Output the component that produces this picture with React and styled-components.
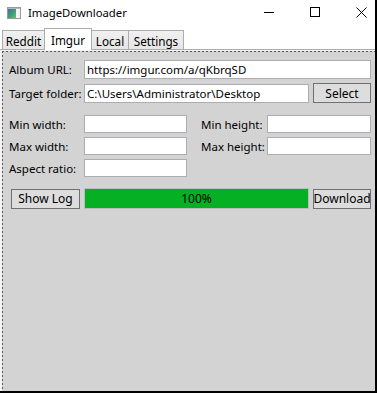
import React from 'react';
import styled, { createGlobalStyle } from 'styled-components';

const Global = createGlobalStyle`
  html, body {
    margin: 0;
    padding: 0;
    background: #ffffff;
  }
  body {
    font-family: "Noto Sans", "Open Sans", sans-serif;
    font-size: 11.5px;
    color: #000;
  }
`;

const Window = styled.div`
  width: 377px;
  height: 393px;
  box-sizing: border-box;
  border-right: 2px solid #000;
  border-bottom: 2px solid #000;
  background: #fff;
  display: flex;
  flex-direction: column;
  overflow: hidden;
`;

const TitleBar = styled.div`
  height: 27px;
  flex: none;
  display: flex;
  align-items: center;
  padding-left: 7px;
  box-sizing: border-box;
  padding-bottom: 2px;
`;

const Title = styled.span`
  margin-left: 7px;
  font-size: 11.3px;
  flex: 1;
`;

const Controls = styled.div`
  display: flex;
  align-items: center;
  gap: 35px;
  padding-right: 8px;
`;

const Glyph = styled.svg`
  width: 11px;
  height: 11px;
  display: block;
`;

const TabStrip = styled.div`
  height: 22px;
  flex: none;
  display: flex;
  align-items: flex-end;
  padding-left: 3px;
`;

const Tab = styled.div`
  width: ${p => p.$w}px;
  height: ${p => (p.$active ? 22 : 19)}px;
  box-sizing: border-box;
  display: flex;
  align-items: center;
  justify-content: center;
  padding-top: ${p => (p.$active ? 0 : 1)}px;
  border: 1px solid #acacac;
  border-bottom: none;
  margin-left: -1px;
  background: ${p => (p.$active ? '#fff' : 'linear-gradient(#f0f0f0, #e5e5e5)')};
  position: relative;
  z-index: ${p => (p.$active ? 1 : 0)};
  margin-bottom: ${p => (p.$active ? -1 : 0)}px;
  font-size: 11.7px;
`;

const Pane = styled.div`
  flex: 1;
  border-top: 1px solid #acacac;
  padding: 1px 0 0 2px;
  display: flex;
  background: #f4f4f4;
`;

const Inner = styled.div`
  flex: 1;
  box-sizing: border-box;
  padding: 9px 4px 0 7px;
  background:
    repeating-linear-gradient(to right, #5a5a5a 0 2px, transparent 2px 4px) top left / 100% 1px no-repeat,
    repeating-linear-gradient(to bottom, #5a5a5a 0 2px, transparent 2px 4px) top left / 1px 100% no-repeat,
    #d3d3d3;
`;

const Row = styled.div`
  display: flex;
  align-items: center;
  height: ${p => p.$h || 19}px;
  margin-bottom: ${p => p.$mb || 0}px;
  gap: 4px;
`;

const Label = styled.span`
  width: ${p => p.$w || 71}px;
  flex: none;
  white-space: nowrap;
`;

const Input = styled.div`
  height: ${p => p.$h || 19}px;
  box-sizing: border-box;
  border: 1px solid #abadb3;
  background: #fff;
  padding-left: 2px;
  display: flex;
  align-items: center;
  white-space: nowrap;
  overflow: hidden;
  flex: ${p => (p.$w ? 'none' : '1')};
  width: ${p => (p.$w ? `${p.$w}px` : 'auto')};
`;

const Button = styled.div`
  width: ${p => p.$w}px;
  height: 20px;
  box-sizing: border-box;
  border: 1px solid #707070;
  background: #dddddd;
  display: flex;
  align-items: center;
  justify-content: center;
  flex: none;
  font-size: 12px;
  margin-left: ${p => p.$ml || 0}px;
`;

const SizeGrid = styled.div`
  display: grid;
  grid-template-columns: 75px 103px 80px 104px;
  grid-auto-rows: 18px;
  row-gap: 4px;
  align-items: center;
  margin-top: 12px;
`;

const GridLabel = styled.span`
  padding-left: ${p => p.$pl || 0}px;
  white-space: nowrap;
`;

const Progress = styled.div`
  width: 225px;
  height: 21px;
  box-sizing: border-box;
  border: 1px solid #bcbcbc;
  background: #06b025;
  display: flex;
  align-items: center;
  justify-content: center;
  flex: none;
  font-size: 12px;
`;

const ActionRow = styled.div`
  display: flex;
  align-items: center;
  margin-top: 11px;
  height: 21px;
  gap: 4px;
`;

function AppIcon() {
  return (
    <svg width="14" height="12" viewBox="0 0 14 12">
      <defs>
        <linearGradient id="ic" x1="0" y1="0" x2="1" y2="1">
          <stop offset="0" stopColor="#3d6fb0" />
          <stop offset="0.5" stopColor="#3f9a7a" />
          <stop offset="1" stopColor="#6fc06a" />
        </linearGradient>
      </defs>
      <rect x="0.5" y="0.5" width="13" height="11" fill="#e8e8e8" stroke="#9a9a9a" />
      <rect x="1" y="2" width="8" height="9" fill="url(#ic)" />
      <rect x="9" y="2" width="4" height="9" fill="#f4f4f4" />
      <rect x="1" y="1" width="12" height="1" fill="#b8b8b8" />
    </svg>
  );
}

export default function App() {
  return (
    <>
      <Global />
      <Window>
        <TitleBar>
          <AppIcon />
          <Title>ImageDownloader</Title>
          <Controls>
            <Glyph viewBox="0 0 11 11">
              <line x1="0" y1="5.5" x2="10" y2="5.5" stroke="#000" strokeWidth="1" />
            </Glyph>
            <Glyph viewBox="0 0 11 11">
              <rect x="0.5" y="0.5" width="9" height="9" fill="none" stroke="#000" strokeWidth="1" />
            </Glyph>
            <Glyph viewBox="0 0 11 11">
              <path d="M0.5 0.5 L10.5 10.5 M10.5 0.5 L0.5 10.5" stroke="#000" strokeWidth="1" />
            </Glyph>
          </Controls>
        </TitleBar>
        <TabStrip>
          <Tab $w={43}>Reddit</Tab>
          <Tab $w={48} $active>Imgur</Tab>
          <Tab $w={38}>Local</Tab>
          <Tab $w={56}>Settings</Tab>
        </TabStrip>
        <Pane>
          <Inner>
            <Row $mb={4}>
              <Label $w={71}>Album URL:</Label>
              <Input>https://imgur.com/a/qKbrqSD</Input>
            </Row>
            <Row $h={20}>
              <Label $w={71}>Target folder:</Label>
              <Input>C:\Users\Administrator\Desktop</Input>
              <Button $w={58}>Select</Button>
            </Row>
            <SizeGrid>
              <GridLabel>Min width:</GridLabel>
              <Input $h={18} />
              <GridLabel $pl={14}>Min height:</GridLabel>
              <Input $h={18} />
              <GridLabel>Max width:</GridLabel>
              <Input $h={18} />
              <GridLabel $pl={14}>Max height:</GridLabel>
              <Input $h={18} />
              <GridLabel>Aspect ratio:</GridLabel>
              <Input $h={18} />
            </SizeGrid>
            <ActionRow>
              <Button $w={69} $ml={2}>Show Log</Button>
              <Progress>100%</Progress>
              <Button $w={58}>Download</Button>
            </ActionRow>
          </Inner>
        </Pane>
      </Window>
    </>
  );
}
